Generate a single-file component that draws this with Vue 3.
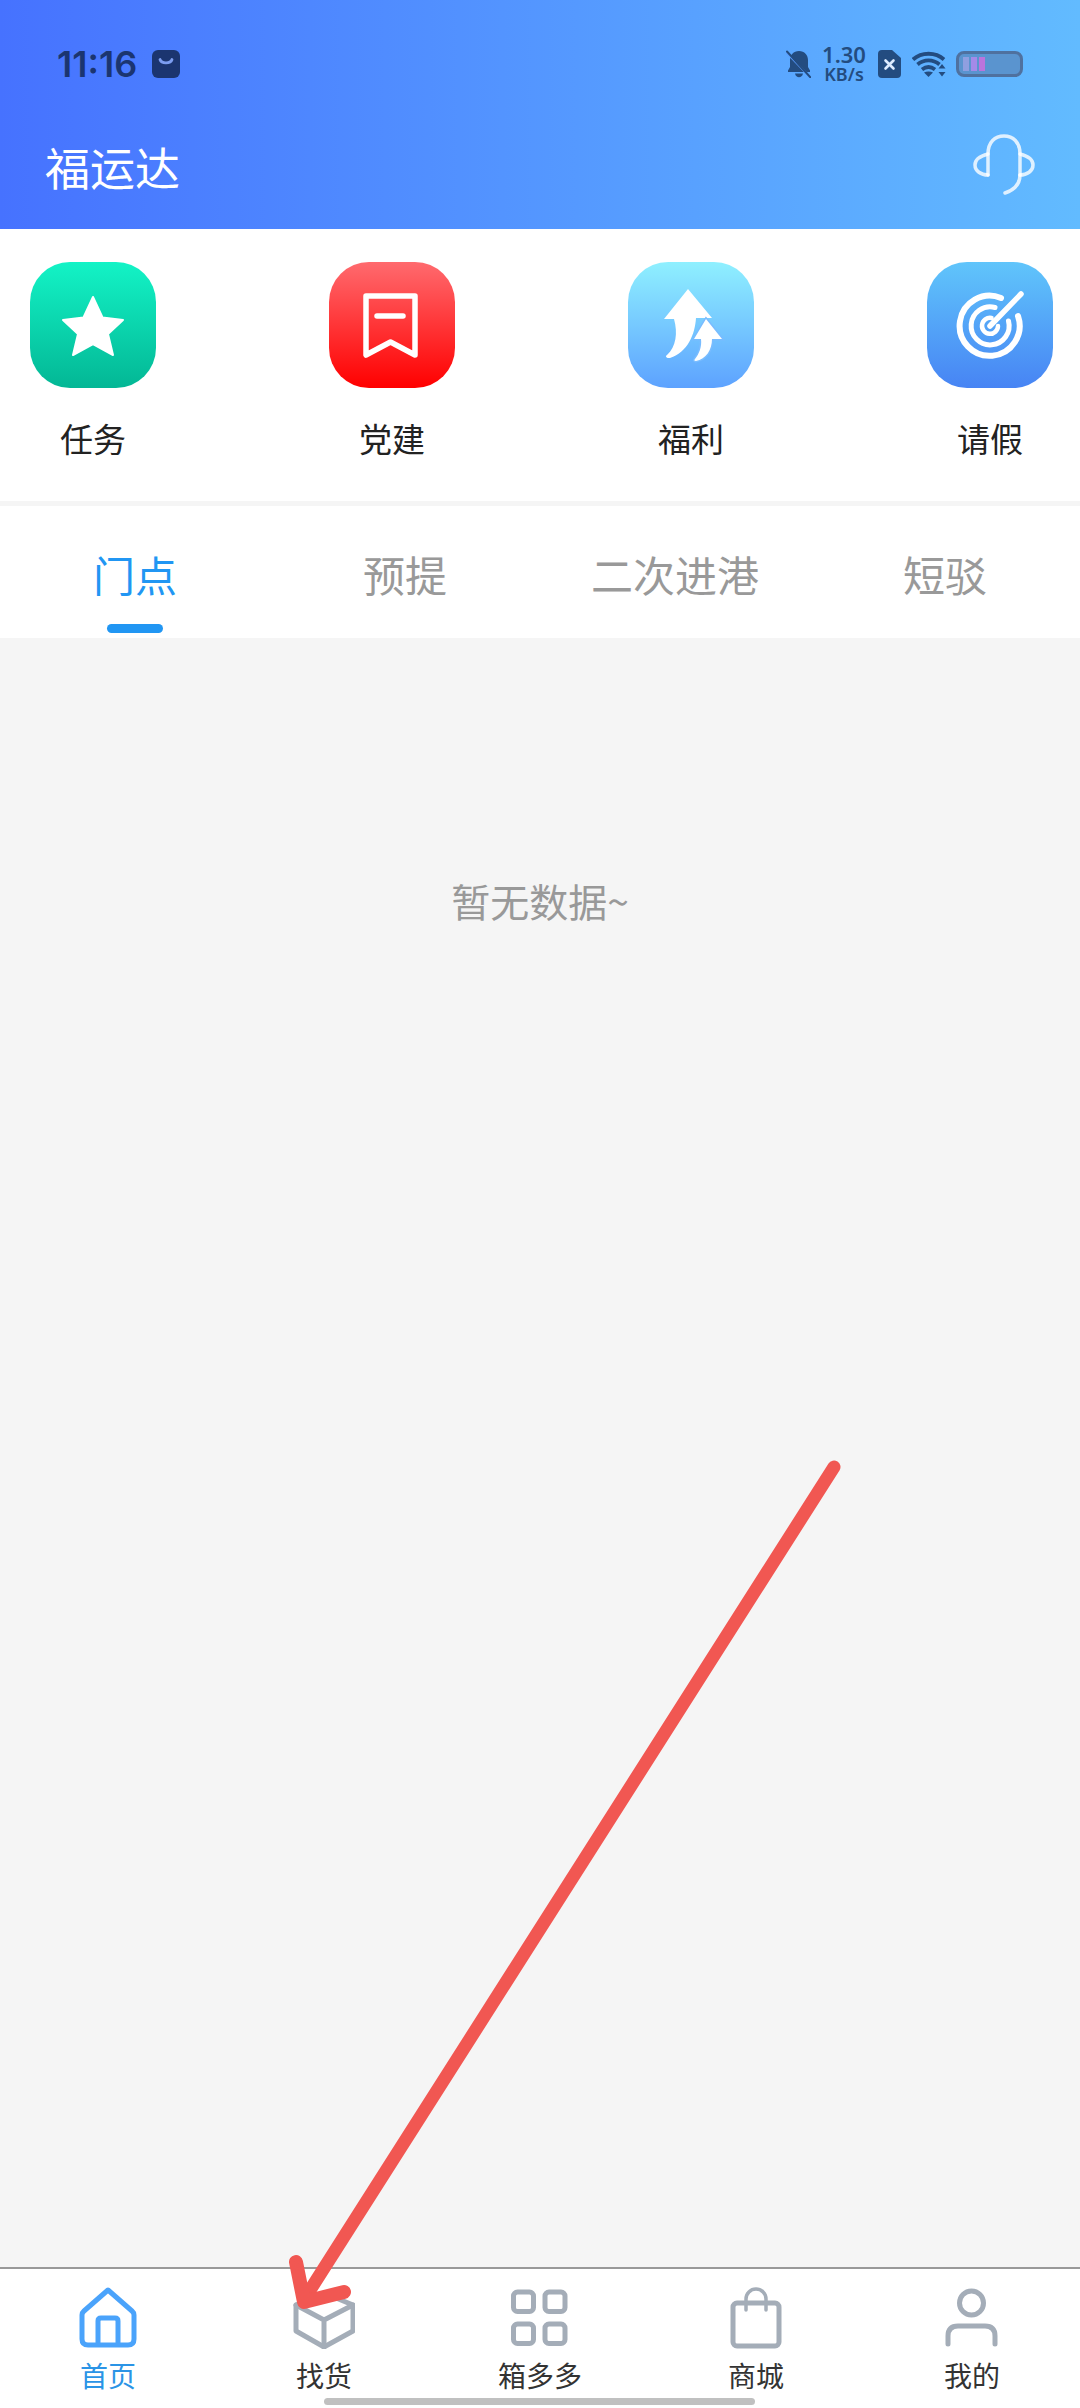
<script setup>
const tabs = ["门点", "预提", "二次进港", "短驳"];
</script>

<template>
  <div class="page">
    <header class="header">
      <div class="status">
        <div class="status-left">
          <span class="time">11:16</span>
          <svg class="bag" viewBox="0 0 28 28">
            <rect width="28" height="28" rx="6" fill="#1b3570" />
            <path d="M8 9.500c1.500 4.500 10.500 4.500 12 0" fill="none" stroke="#7c9df0" stroke-width="2.800" stroke-linecap="round" />
          </svg>
        </div>
        <div class="status-right">
          <svg class="bell" viewBox="0 0 25 28">
            <path d="M13 1c5.500 0 9 4 9 9v7l2 3.500V22H2v-1.500L4 17v-7c0-5 3.500-9 9-9z" fill="#234c80" />
            <path d="M9 23.500h8c-.5 2.600-2.200 3.800-4 3.800s-3.500-1.200-4-3.800z" fill="#234c80" />
            <path d="M0 2l24 25" stroke="#5a9dff" stroke-width="2" />
            <path d="M1 1.500l23.500 26" stroke="#234c80" stroke-width="2" stroke-linecap="round" />
          </svg>
          <div class="speed">
            <span class="speed-num">1.30</span>
            <span class="speed-unit">KB/s</span>
          </div>
          <svg class="sim" viewBox="0 0 23 28">
            <path d="M4 0h10l9 8v16a4 4 0 0 1-4 4H4a4 4 0 0 1-4-4V4a4 4 0 0 1 4-4z" fill="#234c80" />
            <path d="M7.500 10.500l8 8m0-8l-8 8" stroke="#dcebff" stroke-width="2.600" stroke-linecap="round" />
          </svg>
          <svg class="wifi" viewBox="0 0 34 26">
            <g fill="none" stroke="#234c80" stroke-width="3.800">
              <path d="M1 8.500C9.500 .8 23.500 .8 32 8.500" />
              <path d="M5.500 13.500c6.500-5.500 15.500-5.500 22 0" />
              <path d="M10 18.500c4-3 9-3 13 0" />
            </g>
            <path d="M12 21.500c2.500-1.300 6.500-1.300 9 0l-4.500 4.500z" fill="#234c80" />
            <path d="M30 13l3.500 4.500h-7zM30 25.500l3.500-4.500h-7z" fill="#234c80" />
          </svg>
          <div class="battery">
            <span class="cell cell-a"></span>
            <span class="cell cell-b"></span>
            <span class="cell cell-c"></span>
          </div>
        </div>
      </div>
      <div class="title-row">
        <span class="title">福运达</span>
        <svg class="headset" viewBox="0 0 62 62" fill="none" stroke="#fff" stroke-width="3.500" stroke-linecap="round" stroke-opacity="0.8">
          <path d="M15 41V20C15 8 22 2 31 2s16 6 16 18v21" />
          <path d="M47 41c0 9-6 15-15 18" />
          <path d="M15 20C7 22 2 26 2 31c0 6 6 10 13 10" />
          <path d="M47 20c8 2 13 6 13 11 0 6-6 10-13 10" />
        </svg>
      </div>
    </header>

    <section class="shortcuts">
      <div class="shortcut">
        <div class="tile tile-green">
          <svg viewBox="0 0 126 126">
            <path d="M63 35l9.500 20.500L93 58 78 72l5 21-20-11-20 11 5-21-15-14 20.500-2.500z" fill="#fff" stroke="#fff" stroke-width="2" stroke-linejoin="round" />
          </svg>
        </div>
        <span>任务</span>
      </div>
      <div class="shortcut">
        <div class="tile tile-red">
          <svg viewBox="0 0 126 126" fill="none" stroke="#fff" stroke-width="5.500" stroke-linecap="round" stroke-linejoin="round">
            <path d="M37 34h49v59L61.500 80 37 93z" />
            <path d="M48 54h26" />
          </svg>
        </div>
        <span>党建</span>
      </div>
      <div class="shortcut">
        <div class="tile tile-sky">
          <svg viewBox="0 0 126 126" fill="#fff">
            <path d="M60 27l24 29H68c-1 16-8 34-26 40-4 .5-5-2-3-3 9-8 11-22 7-36H36z" />
            <path d="M78 57l16 20H84c0 11-6 20-16 22-2 0-2-1-1-2 4-5 7-12 6-20h-7z" stroke="#79bcff" stroke-width="3" paint-order="stroke" />
          </svg>
        </div>
        <span>福利</span>
      </div>
      <div class="shortcut">
        <div class="tile tile-blue">
          <svg viewBox="0 0 124 126" fill="none" stroke="#fff" stroke-linecap="round">
            <path d="M90 54A30 30 0 1 1 73 36" stroke-width="6" />
            <path d="M80.500 59A19 19 0 1 1 67 45.500" stroke-width="5" />
            <path d="M70 64A8 8 0 1 1 63.500 56" stroke-width="4.500" />
            <path d="M62 64l31-32" stroke-width="5.500" />
          </svg>
        </div>
        <span>请假</span>
      </div>
    </section>

    <nav class="tabs">
      <div v-for="(tab, i) in tabs" :key="tab" class="tab" :class="{ active: i === 0 }">
        <span>{{ tab }}</span>
        <i class="tab-line"></i>
      </div>
    </nav>

    <main class="content">
      <p class="empty">暂无数据~</p>
    </main>

    <footer class="navbar">
      <div class="nav-item active">
        <svg viewBox="0 0 62 62" fill="none" stroke="#4aa3fb" stroke-width="5" stroke-linejoin="round">
          <path d="M31 3L7 24c-1.500 1.300-2 2.500-2 4v24c0 4 2 6 6 6h40c4 0 6-2 6-6V28c0-1.500-.5-2.700-2-4z" />
          <path d="M21 58V34c0-2 1-3 3-3h14c2 0 3 1 3 3v24" />
        </svg>
        <span>首页</span>
      </div>
      <div class="nav-item">
        <svg viewBox="0 0 62 62" class="nav-icon">
          <path d="M31 6l29 12v26L31 60 3 44V18z" />
          <path d="M3 18l28 15 29-15M31 33v27" />
        </svg>
        <span>找货</span>
      </div>
      <div class="nav-item">
        <svg viewBox="0 0 62 62" class="nav-icon">
          <rect x="4.500" y="5" width="20" height="19.500" rx="4" />
          <rect x="36" y="5" width="20" height="19.500" rx="4" />
          <rect x="4.500" y="37" width="20" height="19.500" rx="4" />
          <rect x="36" y="37" width="20" height="19.500" rx="4" />
        </svg>
        <span>箱多多</span>
      </div>
      <div class="nav-item">
        <svg viewBox="0 0 62 62" class="nav-icon">
          <rect x="8" y="16" width="46" height="43" rx="4" />
          <path d="M21 23V12a10 10 0 0 1 20 0v11" stroke-width="3.500" />
        </svg>
        <span>商城</span>
      </div>
      <div class="nav-item">
        <svg viewBox="0 0 62 62" class="nav-icon">
          <circle cx="30.500" cy="16" r="12" />
          <path d="M7 57v-8c0-7 4-10 10-10h27c6 0 10 3 10 10v8" />
        </svg>
        <span>我的</span>
      </div>
      <div class="home-bar"></div>
    </footer>

    <svg class="annotation" viewBox="0 0 1080 2408" fill="none" stroke="#f15752" stroke-linecap="round" stroke-linejoin="round">
      <path d="M834 1467L305 2298" stroke-width="13" />
      <path d="M296 2262l8 40 40-10" stroke-width="14" />
    </svg>
  </div>
</template>

<style scoped>
.page {
  position: relative;
  width: 1080px;
  height: 2408px;
  display: flex;
  flex-direction: column;
  overflow: hidden;
  background: #f5f5f5;
  font-family: "Noto Sans CJK SC", "Noto Sans", sans-serif;
}

.header {
  height: 229px;
  flex-shrink: 0;
  background: linear-gradient(90deg, #4672ff, #62bbff);
}

.status {
  height: 128px;
  padding: 0 57px;
  display: flex;
  align-items: center;
  justify-content: space-between;
  box-sizing: border-box;
}

.status-left {
  display: flex;
  align-items: center;
  gap: 15px;
}

.time {
  font-family: Inter, sans-serif;
  font-size: 36px;
  font-weight: 600;
  line-height: 40px;
  color: #1b3570;
}

.bag {
  width: 28px;
  height: 28px;
}

.status-right {
  display: flex;
  align-items: center;
}

.bell {
  width: 25px;
  height: 28px;
  margin-right: 12px;
}

.speed {
  width: 42px;
  margin-right: 13px;
  display: flex;
  flex-direction: column;
  align-items: center;
  font-family: "Noto Sans", sans-serif;
  font-weight: 600;
  color: #234c80;
}

.speed-num {
  font-size: 22px;
  line-height: 21px;
}

.speed-unit {
  font-size: 18px;
  line-height: 19px;
}

.sim {
  width: 23px;
  height: 28px;
  margin-right: 11px;
}

.wifi {
  width: 34px;
  height: 26px;
  margin-right: 10px;
}

.battery {
  width: 67px;
  height: 26px;
  padding: 3px 4px;
  display: flex;
  gap: 2px;
  box-sizing: border-box;
  border: 3px solid #4f719f;
  border-radius: 8px;
  background: #5a94cf;
}

.cell {
  width: 6px;
}

.cell-a {
  background: #8f9fe0;
}

.cell-b {
  background: #a48ae8;
}

.cell-c {
  background: #bb74dc;
}

.title-row {
  height: 78px;
  padding: 0 45px;
  display: flex;
  align-items: center;
  justify-content: space-between;
}

.title {
  font-size: 45px;
  line-height: 50px;
  color: #fff;
}

.headset {
  width: 62px;
  height: 62px;
  margin-bottom: 5px;
}

.shortcuts {
  height: 272px;
  flex-shrink: 0;
  padding: 33px 27px 0 30px;
  display: flex;
  justify-content: space-between;
  box-sizing: border-box;
  background: #fff;
}

.shortcut {
  width: 126px;
  display: flex;
  flex-direction: column;
  align-items: center;
  font-size: 33px;
  line-height: 40px;
  color: #222;
}

.shortcut span {
  margin-top: 30px;
}

.tile {
  width: 126px;
  height: 126px;
  border-radius: 40px;
}

.tile svg {
  display: block;
  width: 100%;
  height: 100%;
}

.tile-green {
  background: linear-gradient(#13f3c6, #03b795);
}

.tile-red {
  background: linear-gradient(#ff6a6e, #ff0000);
}

.tile-sky {
  background: linear-gradient(#8ff0ff, #5da2ff);
}

.tile-blue {
  background: linear-gradient(#60c5fb, #4784f4);
}

.tabs {
  margin-top: 5px;
  height: 132px;
  flex-shrink: 0;
  padding-top: 43px;
  display: flex;
  box-sizing: border-box;
  background: #fff;
}

.tab {
  flex: 1;
  display: flex;
  flex-direction: column;
  align-items: center;
  font-size: 42px;
  line-height: 50px;
  color: #999;
}

.tab-line {
  width: 56px;
  height: 9px;
  margin-top: 25px;
  border-radius: 5px;
}

.tab.active {
  color: #2196f3;
}

.tab.active .tab-line {
  background: #2196f3;
}

.content {
  flex: 1;
  padding-top: 237px;
}

.empty {
  margin: 0;
  text-align: center;
  font-size: 39px;
  line-height: 50px;
  color: #999;
}

.navbar {
  position: relative;
  height: 141px;
  flex-shrink: 0;
  padding-top: 18px;
  display: flex;
  box-sizing: border-box;
  border-top: 2px solid #999;
  background: #fff;
}

.nav-item {
  flex: 1;
  display: flex;
  flex-direction: column;
  align-items: center;
  font-size: 28px;
  line-height: 30px;
  color: #333;
}

.nav-item svg {
  width: 62px;
  height: 62px;
}

.nav-item span {
  margin-top: 11px;
}

.nav-item.active {
  color: #2b94e6;
}

.nav-icon {
  fill: none;
  stroke: #a4adb8;
  stroke-width: 5;
  stroke-linejoin: round;
  stroke-linecap: round;
}

.home-bar {
  position: absolute;
  left: 324px;
  bottom: 3px;
  width: 431px;
  height: 7px;
  border-radius: 4px;
  background: #c0c0c0;
}

.annotation {
  position: absolute;
  left: 0;
  top: 0;
  width: 1080px;
  height: 2408px;
  pointer-events: none;
}
</style>
